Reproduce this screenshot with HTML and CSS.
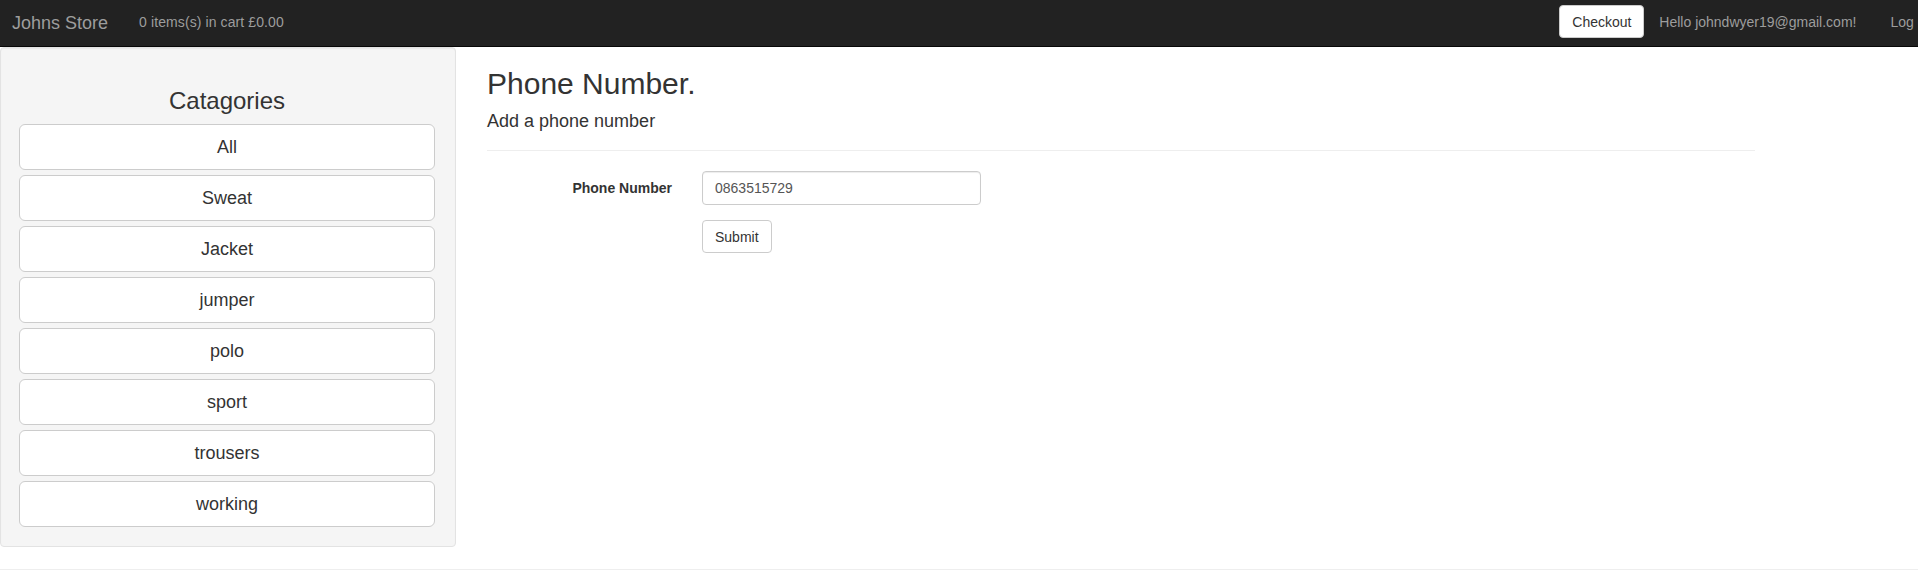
FILE: index.html
```html
<!DOCTYPE html>
<html lang="en">
<head>
<meta charset="utf-8">
<title>Phone Number - Johns Store</title>
<link rel="stylesheet" href="styles.css">
</head>
<body>
<nav class="navbar">
  <div class="nav-left">
    <a class="brand" href="#">Johns Store</a>
    <span class="cart">0 items(s) in cart £0.00</span>
  </div>
  <div class="nav-right">
    <button class="nav-btn">Checkout</button>
    <a class="nav-link" href="#">Hello johndwyer19@gmail.com!</a>
    <a class="nav-link" href="#">Log off</a>
  </div>
</nav>
<div class="page">
  <aside class="well">
    <h3 class="well-title">Catagories</h3>
    <div class="cat-list">
      <a class="cat-btn" href="#">All</a>
      <a class="cat-btn" href="#">Sweat</a>
      <a class="cat-btn" href="#">Jacket</a>
      <a class="cat-btn" href="#">jumper</a>
      <a class="cat-btn" href="#">polo</a>
      <a class="cat-btn" href="#">sport</a>
      <a class="cat-btn" href="#">trousers</a>
      <a class="cat-btn" href="#">working</a>
    </div>
  </aside>
  <main class="content">
    <h2 class="title">Phone Number.</h2>
    <h4 class="subtitle">Add a phone number</h4>
    <hr class="rule">
    <form class="form">
      <div class="form-row">
        <label class="form-label" for="phone">Phone Number</label>
        <input class="form-input" id="phone" type="text" value="0863515729">
      </div>
      <div class="form-row">
        <span class="form-label"></span>
        <button class="submit-btn" type="button">Submit</button>
      </div>
    </form>
  </main>
</div>
<hr class="footer-rule">
</body>
</html>
```
FILE: styles.css
```css
* { box-sizing: border-box; }
html, body { margin: 0; padding: 0; }
body {
  font-family: "Liberation Sans", Arial, Helvetica, sans-serif;
  font-size: 14px;
  line-height: 1.42857;
  color: #333;
  background: #fff;
  overflow: hidden;
  width: 1918px;
  height: 587px;
}
a { text-decoration: none; }

.navbar {
  height: 47px;
  background: #222;
  border-bottom: 1px solid #080808;
  display: flex;
  justify-content: space-between;
  align-items: stretch;
  margin-right: -30px;
}
.nav-left, .nav-right {
  display: flex;
  align-items: center;
}
.brand {
  font-size: 18px;
  line-height: 20px;
  color: #9d9d9d;
  padding-left: 12px;
  padding-right: 31px;
}
.cart {
  color: #9d9d9d;
  font-size: 14px;
  letter-spacing: 0.1px;
}
.nav-btn {
  align-self: flex-start;
  margin-top: 5px;
  height: 33px;
  width: 85px;
  font-family: inherit;
  font-size: 14px;
  color: #333;
  background: #fff;
  border: 1px solid #ccc;
  border-radius: 4px;
  padding: 0 12px;
}
.nav-link {
  color: #9d9d9d;
  font-size: 14px;
  padding: 0 15px;
}
.nav-link + .nav-link { padding-left: 19px; }

.page {
  display: flex;
  align-items: flex-start;
}
.well {
  width: 456px;
  flex: none;
  background: #f5f5f5;
  border: 1px solid #e3e3e3;
  border-radius: 4px;
  box-shadow: inset 0 1px 1px rgba(0,0,0,.05);
  padding: 19px 20px 19px 18px;
}
.well-title {
  font-size: 24px;
  font-weight: 500;
  line-height: 1.1;
  margin: 21px 0 10px;
  text-align: center;
  color: #333;
}
.cat-list {
  display: flex;
  flex-direction: column;
  gap: 5px;
}
.cat-btn {
  display: block;
  height: 46px;
  padding: 10px 16px;
  font-size: 18px;
  line-height: 24px;
  text-align: center;
  color: #333;
  background: #fff;
  border: 1px solid #ccc;
  border-radius: 6px;
}

.content {
  margin-left: 31px;
  width: 1268px;
}
.title {
  font-size: 30px;
  font-weight: 500;
  line-height: 1.1;
  margin: 20px 0 10px;
  color: #333;
}
.subtitle {
  font-size: 18px;
  font-weight: 500;
  line-height: 1.1;
  margin: 12px 0 0;
  color: #333;
}
.rule {
  border: 0;
  border-top: 1px solid #eee;
  margin: 18px 0 20px;
}
.form-row {
  display: flex;
  align-items: flex-start;
  margin-bottom: 15px;
}
.form-label {
  width: 200px;
  flex: none;
  text-align: right;
  padding: 7px 15px 0 0;
  font-weight: bold;
  font-size: 14px;
  line-height: 20px;
  color: #333;
}
.form-input {
  margin-left: 15px;
  width: 279px;
  height: 34px;
  padding: 6px 12px;
  font-family: inherit;
  font-size: 14px;
  line-height: 20px;
  color: #555;
  border: 1px solid #ccc;
  border-radius: 4px;
  box-shadow: inset 0 1px 1px rgba(0,0,0,.075);
}
.submit-btn {
  margin-left: 15px;
  height: 33px;
  padding: 6px 12px;
  font-family: inherit;
  font-size: 14px;
  line-height: 20px;
  color: #333;
  background: #fff;
  border: 1px solid #ccc;
  border-radius: 4px;
}
.footer-rule {
  border: 0;
  border-top: 1px solid #eee;
  margin: 22px 0 0;
}
```
